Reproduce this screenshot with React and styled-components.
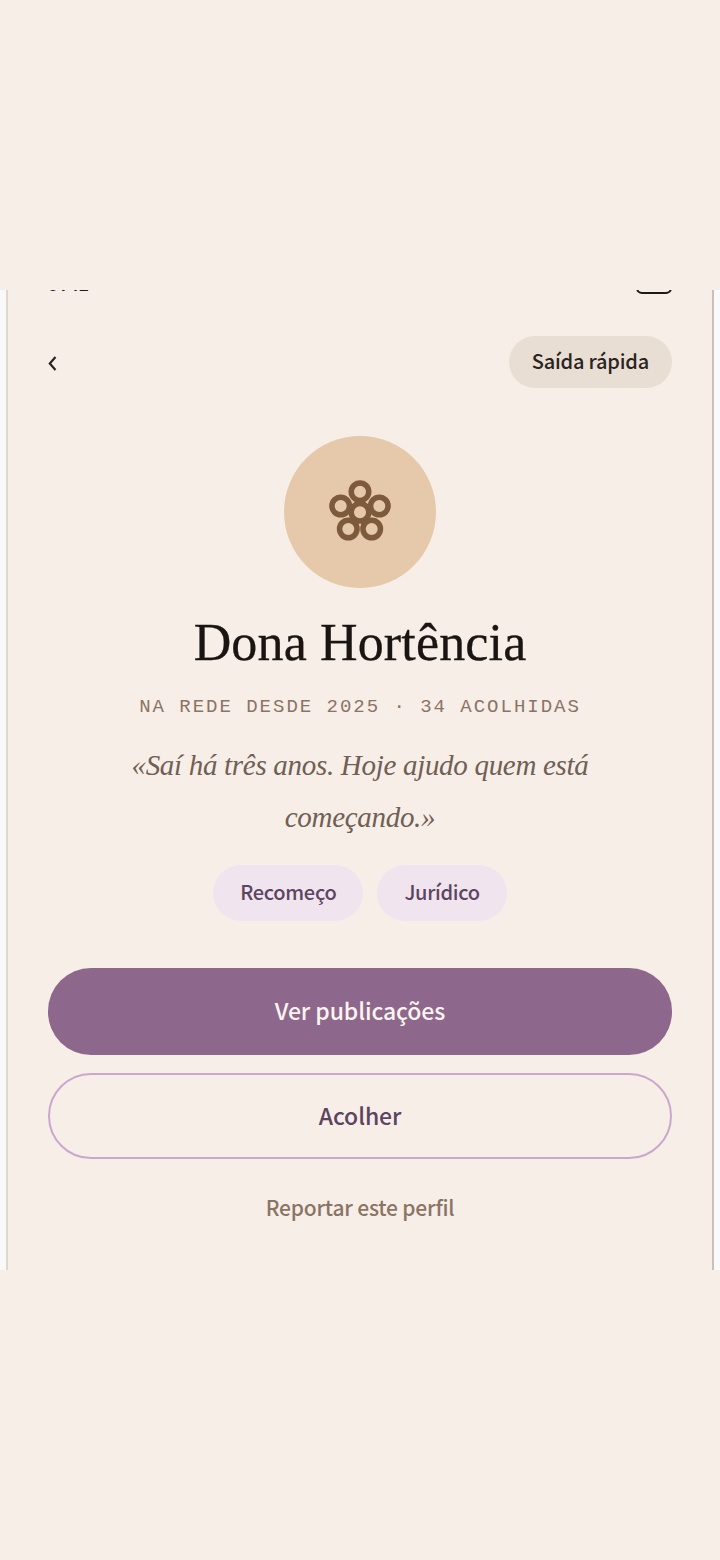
import React from "react";
import styled, { createGlobalStyle } from "styled-components";

const GlobalStyle = createGlobalStyle`
  html, body {
    margin: 0;
    padding: 0;
    background-color: #f7eee7;
  }
`;

const sans = `"Noto Sans CJK SC", "Noto Sans", sans-serif`;
const serif = `"Liberation Serif", serif`;

const Page = styled.div`
  height: 1560px;
  padding-top: 290px;
  box-sizing: border-box;
`;

const Frame = styled.div`
  height: 980px;
  background-color: #f9f9f9;
  padding: 0 6px;
  box-sizing: border-box;
`;

const Phone = styled.div`
  height: 100%;
  overflow: hidden;
  background-color: #f7eee7;
  border-left: 2px solid #e0d8d0;
  border-right: 2px solid #c9c1b9;
  padding: 0 40px;
  display: flex;
  flex-direction: column;
  align-items: center;
`;

const StatusBar = styled.div`
  align-self: stretch;
  height: 24px;
  margin-top: -20px;
  flex: none;
  display: flex;
  justify-content: space-between;
  align-items: flex-end;
`;

const Clock = styled.span`
  font-family: "Liberation Mono", monospace;
  font-size: 17px;
  line-height: 16px;
  font-weight: 700;
  color: #1f1a17;
  margin-bottom: -1px;
`;

const Battery = styled.div`
  width: 36px;
  height: 22px;
  box-sizing: border-box;
  border: 2px solid #1f1a17;
  border-radius: 6px;
`;

const TopBar = styled.div`
  align-self: stretch;
  display: flex;
  justify-content: space-between;
  align-items: center;
  margin-top: 42px;
`;

const BackButton = styled.span`
  display: flex;
  margin-top: 3px;
`;

const ExitButton = styled.span`
  height: 52px;
  padding: 0 23px 3px;
  box-sizing: border-box;
  border-radius: 26px;
  background-color: #e8ded4;
  color: #2a2320;
  font-family: ${sans};
  font-size: 20px;
  font-weight: 500;
  letter-spacing: -0.2px;
  display: flex;
  align-items: center;
`;

const Avatar = styled.div`
  width: 152px;
  height: 152px;
  margin-top: 48px;
  border-radius: 50%;
  background-color: #e6c8aa;
  display: flex;
  align-items: center;
  justify-content: center;
`;

const Name = styled.h1`
  margin: 24px 0 0;
  font-family: ${serif};
  font-size: 52px;
  line-height: 62px;
  font-weight: 400;
  letter-spacing: 0.15px;
  -webkit-text-stroke: 0.3px #1a1512;
  color: #1a1512;
  white-space: nowrap;
`;

const Meta = styled.div`
  margin-top: 20px;
  font-family: "Liberation Mono", monospace;
  font-size: 19px;
  line-height: 26px;
  letter-spacing: 1.98px;
  color: #8a7466;
  white-space: nowrap;
`;

const Quote = styled.p`
  margin: 19px 0 0;
  width: 480px;
  text-align: center;
  font-family: ${serif};
  font-style: italic;
  font-size: 29px;
  line-height: 52px;
  letter-spacing: -0.3px;
  color: #6f5f55;
`;

const Tags = styled.div`
  display: flex;
  gap: 14px;
  margin-top: 22px;
`;

const Tag = styled.span`
  height: 56px;
  padding: 0 27px 3px;
  box-sizing: border-box;
  border-radius: 28px;
  background-color: #f0e4ee;
  color: #5b4560;
  font-family: ${sans};
  font-size: 20px;
  font-weight: 500;
  letter-spacing: -0.3px;
  display: flex;
  align-items: center;
`;

const Action = styled.div`
  align-self: stretch;
  height: 86px;
  padding-bottom: 3px;
  box-sizing: border-box;
  border-radius: 43px;
  display: flex;
  align-items: center;
  justify-content: center;
  font-family: ${sans};
  font-size: 23px;
  font-weight: 500;
  letter-spacing: -0.1px;
`;

const PrimaryAction = styled(Action)`
  margin-top: 47px;
  height: 87px;
  background-color: #8e688c;
  color: #fbf4ef;
`;

const SecondaryAction = styled(Action)`
  margin-top: 18px;
  border: 2px solid #c8a8cc;
  color: #5b4560;
`;

const ReportLink = styled.div`
  margin-top: 31px;
  font-family: ${sans};
  font-size: 21px;
  line-height: 34px;
  font-weight: 500;
  letter-spacing: -0.2px;
  color: #8a7466;
`;

const FlowerIcon = () => (
  <svg width="64" height="64" viewBox="0 0 64 64" fill="none" stroke="#7d5a3c" strokeWidth="5.5">
    <circle cx="32" cy="32.3" r="8.75" />
    <circle cx="32" cy="11.7" r="8.75" />
    <circle cx="12.7" cy="26" r="8.75" />
    <circle cx="51.3" cy="26" r="8.75" />
    <circle cx="20.3" cy="49" r="8.75" />
    <circle cx="43.7" cy="49" r="8.75" />
  </svg>
);

export default function App() {
  return (
    <Page>
      <GlobalStyle />
      <Frame>
        <Phone>
          <StatusBar>
            <Clock>9:41</Clock>
            <Battery />
          </StatusBar>
          <TopBar>
            <BackButton>
              <svg width="9" height="15" viewBox="0 0 9 15" fill="none" stroke="#2a2320" strokeWidth="2.2">
                <path d="M7.5 1 L1.8 7.5 L7.5 14" />
              </svg>
            </BackButton>
            <ExitButton>Saída rápida</ExitButton>
          </TopBar>
          <Avatar>
            <FlowerIcon />
          </Avatar>
          <Name>Dona Hortência</Name>
          <Meta>NA REDE DESDE 2025 · 34 ACOLHIDAS</Meta>
          <Quote>«Saí há três anos. Hoje ajudo quem está começando.»</Quote>
          <Tags>
            <Tag>Recomeço</Tag>
            <Tag>Jurídico</Tag>
          </Tags>
          <PrimaryAction>Ver publicações</PrimaryAction>
          <SecondaryAction>Acolher</SecondaryAction>
          <ReportLink>Reportar este perfil</ReportLink>
        </Phone>
      </Frame>
    </Page>
  );
}
